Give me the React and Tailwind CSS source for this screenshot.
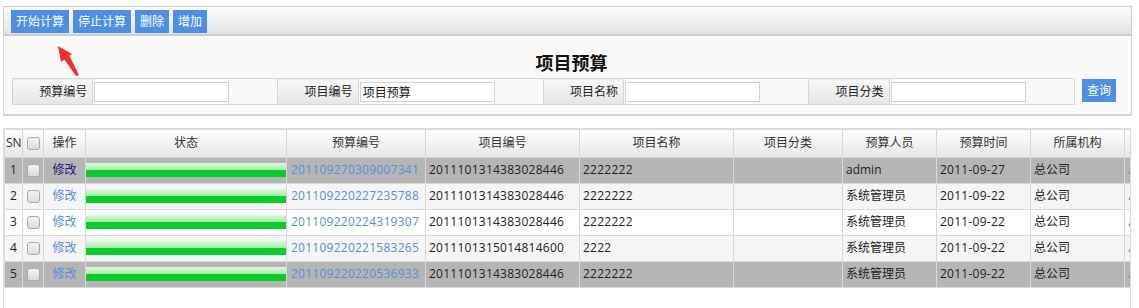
import React from "react";

const rows = [
  { sn: 1, no: "201109270309007341", proj: "2011101314383028446", name: "2222222", user: "admin", date: "2011-09-27", hl: true },
  { sn: 2, no: "201109220227235788", proj: "2011101314383028446", name: "2222222", user: "系统管理员", date: "2011-09-22", alt: true },
  { sn: 3, no: "201109220224319307", proj: "2011101314383028446", name: "2222222", user: "系统管理员", date: "2011-09-22" },
  { sn: 4, no: "201109220221583265", proj: "2011101315014814600", name: "2222", user: "系统管理员", date: "2011-09-22", alt: true },
  { sn: 5, no: "201109220220536933", proj: "2011101314383028446", name: "2222222", user: "系统管理员", date: "2011-09-22", hl: true },
];

const cols = [18, 21, 42, 201, 139, 154, 154, 109, 94, 94, 94, 80];
const heads = ["SN", "", "操作", "状态", "预算编号", "项目编号", "项目名称", "项目分类", "预算人员", "预算时间", "所属机构", "部门"];

const Btn = ({ children }) => (
  <button className="h-[23px] bg-[#4b8fe6] px-[5px] text-[12px] leading-[23px] text-white">{children}</button>
);

const Check = () => (
  <span className="mx-auto block h-[13px] w-[13px] rounded-[3px] border border-[#a9a9a9] bg-gradient-to-b from-[#f4f4f4] to-[#dcdcdc]" />
);

const Field = ({ label, value }) => (
  <>
    <td className="w-[80px] border-x border-[#d6d6d6] bg-gradient-to-b from-[#f8f8f8] to-[#e6e6e6] pr-[5px] text-right">{label}</td>
    <td className="w-[185px] pl-[1px]">
      <input
        defaultValue={value}
        className="block h-[20px] w-[135px] border border-[#d2d2d2] bg-white px-[2px] text-[12px] text-[#111] outline-none"
      />
    </td>
  </>
);

export default function App() {
  return (
    <div className="relative h-[308px] w-[1139px] overflow-hidden bg-white pt-[6px] font-['Open_Sans','Noto_Sans_CJK_SC',sans-serif] text-[12px] text-[#222]">
      {/* toolbar */}
      <div className="ml-[3px] flex h-[30px] w-[1129px] gap-[4px] border border-b-2 border-[#cdcdcd] bg-gradient-to-b from-[#fefefe] to-[#e3e3e3] pl-[7px] pt-[3px]">
        <Btn>开始计算</Btn>
        <Btn>停止计算</Btn>
        <Btn>删除</Btn>
        <Btn>增加</Btn>
      </div>

      {/* search panel */}
      <div className="ml-[3px] h-[80px] w-[1129px] border-x border-b-2 border-[#d4d4d4] bg-[#f9f9f9] pl-[8px] pt-[15px]">
        <div className="text-center text-[18px] font-bold leading-[24px] text-[#111]">项目预算</div>
        <div className="mt-[3px] flex items-start">
          <table className="h-[27px] w-[1063px] border-collapse border border-[#d6d6d6]">
            <tbody>
              <tr>
                <Field label="预算编号" />
                <Field label="项目编号" value="项目预算" />
                <Field label="项目名称" />
                <Field label="项目分类" />
              </tr>
            </tbody>
          </table>
          <button className="ml-[7px] mt-[1px] h-[23px] w-[34px] bg-[#4b8fe6] text-[12px] text-white">查询</button>
        </div>
      </div>

      {/* table */}
      <div className="ml-[3px] mt-[12px] h-[200px] w-[1128px] overflow-hidden border-x border-t-2 border-[#dcdcdc]">
        <table className="table-fixed border-collapse" style={{ width: cols.reduce((a, b) => a + b, 0) }}>
          <colgroup>
            {cols.map((w, i) => (
              <col key={i} style={{ width: w }} />
            ))}
          </colgroup>
          <thead>
            <tr className="h-[27px] bg-gradient-to-b from-white to-[#e6e6e6] text-[#333]">
              {heads.map((h, i) => (
                <th key={i} className={`whitespace-nowrap border-x border-b border-[#d6d6d6] font-normal ${i === 0 ? "text-left pl-[1px]" : "text-center"}`}>
                  {i === 1 ? <Check /> : h}
                </th>
              ))}
            </tr>
          </thead>
          <tbody>
            {rows.map((r) => (
              <tr key={r.sn} className={`h-[26px] ${r.hl ? "bg-[#b5b5b5]" : r.alt ? "bg-[#f5f5f5]" : "bg-white"}`}>
                <td className="border border-[#d8d8d8] text-center">{r.sn}</td>
                <td className="border border-[#d8d8d8]"><Check /></td>
                <td className={`border border-[#d8d8d8] text-center ${r.sn === 1 ? "text-[#24206b]" : "text-[#5a8ddb]"}`}>修改</td>
                <td className="border border-[#d8d8d8] p-0 align-middle">
                  <div className="h-[7px] w-full bg-gradient-to-b from-[#dcf9dc] to-[#a6eaa8]" />
                  <div className="h-[7px] w-full bg-[#05d02a]" />
                </td>
                <td className="whitespace-nowrap border border-[#d8d8d8] pl-[4px] tracking-[0.25px] text-[#5a8ddb]">{r.no}</td>
                <td className="whitespace-nowrap border border-[#d8d8d8] pl-[3px] tracking-[0.25px]">{r.proj}</td>
                <td className="border border-[#d8d8d8] pl-[3px] tracking-[0.25px]">{r.name}</td>
                <td className="border border-[#d8d8d8]" />
                <td className="whitespace-nowrap border border-[#d8d8d8] pl-[3px]">{r.user}</td>
                <td className="border border-[#d8d8d8] pl-[3px] tracking-[0.25px]">{r.date}</td>
                <td className="border border-[#d8d8d8] pl-[3px]">总公司</td>
                <td className="whitespace-nowrap border border-[#d8d8d8] pl-[3px] text-[#a86a1e]">总公司</td>
              </tr>
            ))}
          </tbody>
        </table>
      </div>

      {/* annotation arrow */}
      <svg className="absolute left-0 top-0" width="120" height="90" viewBox="0 0 120 90">
        <polygon points="58,46 72,54 61,62" fill="#ee3228" />
        <polygon points="64,59 69,55 79,75 76,76" fill="#ee3228" />
      </svg>
    </div>
  );
}
